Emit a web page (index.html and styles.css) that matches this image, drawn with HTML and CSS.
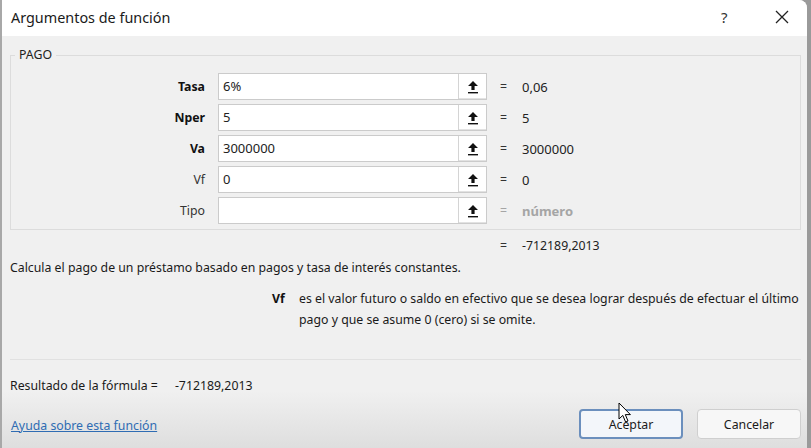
FILE: index.html
```html
<!DOCTYPE html>
<html lang="es">
<head>
<meta charset="utf-8">
<title>Argumentos de función</title>
<link rel="stylesheet" href="styles.css">
</head>
<body>
<div class="window">
  <div class="titlebar">
    <span class="title">Argumentos de función</span>
    <span class="help">?</span>
    <span class="close">
      <svg width="14" height="14" viewBox="0 0 14 14"><path d="M1 1 L13 13 M13 1 L1 13" stroke="#222" stroke-width="1.3" fill="none"/></svg>
    </span>
  </div>
  <div class="content">
    <fieldset class="group">
      <legend>PAGO</legend>
      <div class="args">
        <div class="arg-label strong">Tasa</div>
        <div class="field"><span class="field-text">6%</span><span class="field-btn"><svg width="12" height="14" viewBox="0 0 12 14"><path d="M6 1 L11 6 L7.6 6 L7.6 10 L4.4 10 L4.4 6 L1 6 Z" fill="#111"/><rect x="1" y="12" width="10" height="1.4" fill="#111"/></svg></span></div>
        <div class="eq">=</div><div class="val">0,06</div>

        <div class="arg-label strong">Nper</div>
        <div class="field"><span class="field-text">5</span><span class="field-btn"><svg width="12" height="14" viewBox="0 0 12 14"><path d="M6 1 L11 6 L7.6 6 L7.6 10 L4.4 10 L4.4 6 L1 6 Z" fill="#111"/><rect x="1" y="12" width="10" height="1.4" fill="#111"/></svg></span></div>
        <div class="eq">=</div><div class="val">5</div>

        <div class="arg-label strong">Va</div>
        <div class="field"><span class="field-text">3000000</span><span class="field-btn"><svg width="12" height="14" viewBox="0 0 12 14"><path d="M6 1 L11 6 L7.6 6 L7.6 10 L4.4 10 L4.4 6 L1 6 Z" fill="#111"/><rect x="1" y="12" width="10" height="1.4" fill="#111"/></svg></span></div>
        <div class="eq">=</div><div class="val">3000000</div>

        <div class="arg-label">Vf</div>
        <div class="field"><span class="field-text">0</span><span class="field-btn"><svg width="12" height="14" viewBox="0 0 12 14"><path d="M6 1 L11 6 L7.6 6 L7.6 10 L4.4 10 L4.4 6 L1 6 Z" fill="#111"/><rect x="1" y="12" width="10" height="1.4" fill="#111"/></svg></span></div>
        <div class="eq">=</div><div class="val">0</div>

        <div class="arg-label">Tipo</div>
        <div class="field"><span class="field-text"></span><span class="field-btn"><svg width="12" height="14" viewBox="0 0 12 14"><path d="M6 1 L11 6 L7.6 6 L7.6 10 L4.4 10 L4.4 6 L1 6 Z" fill="#111"/><rect x="1" y="12" width="10" height="1.4" fill="#111"/></svg></span></div>
        <div class="eq muted">=</div><div class="val muted strong">número</div>
      </div>
    </fieldset>

    <div class="result-row"><span class="eq">=</span><span class="val">-712189,2013</span></div>
    <p class="desc">Calcula el pago de un préstamo basado en pagos y tasa de interés constantes.</p>
    <div class="arg-help">
      <span class="arg-help-name">Vf</span>
      <span class="arg-help-text">es el valor futuro o saldo en efectivo que se desea lograr después de efectuar el último pago y que se asume 0 (cero) si se omite.</span>
    </div>

    <div class="separator"></div>
    <div class="formula-result">Resultado de la fórmula =<span class="formula-value">-712189,2013</span></div>

    <div class="footer">
      <a class="help-link" href="#">Ayuda sobre esta función</a>
      <div class="buttons">
        <button class="btn btn-default">Aceptar</button>
        <button class="btn">Cancelar</button>
      </div>
    </div>
  </div>
  <svg class="cursor" width="14" height="22" viewBox="0 0 14 22"><path d="M1 1 L1 17 L4.8 13.4 L7.6 20 L10 19 L7.3 12.6 L12.4 12.6 Z" fill="#fff" stroke="#000" stroke-width="1" stroke-linejoin="round"/></svg>
</div>
</body>
</html>
```

FILE: styles.css
```css
* { box-sizing: border-box; }

html, body {
  margin: 0;
  padding: 0;
  width: 811px;
  height: 448px;
  overflow: hidden;
  background: #9a9a9a;
  font-family: "Noto Sans", "Open Sans", Arial, sans-serif;
  font-size: 12.3px;
  color: #1a1a1a;
}

.window {
  position: relative;
  width: 807px;
  height: 448px;
  background: #f0f0f0;
  border-left: 2px solid #a8a8a8;
  border-top-right-radius: 8px;
  overflow: hidden;
  display: flex;
  flex-direction: column;
}

.titlebar {
  height: 36px;
  background: #ffffff;
  display: flex;
  align-items: center;
  padding-left: 9px;
  flex: none;
}

.title {
  font-size: 14.4px;
  color: #1a1a1a;
  flex: 1;
  padding-bottom: 2px;
}

.help {
  font-size: 15px;
  color: #333;
  width: 54px;
  text-align: left;
  padding-bottom: 2px;
}

.close {
  width: 32px;
  display: flex;
  align-items: center;
  padding-bottom: 2px;
}

.content {
  flex: 1;
  display: flex;
  flex-direction: column;
  padding: 0 6px 0 8px;
  background: linear-gradient(to bottom, #f0f0f0 0px, #f0f0f0 355px, #dedede 412px, #cfcfcf 100%);
}

.group {
  margin: 10px 0 0 0;
  padding: 9px 0 5px 0;
  border: 1px solid #dcdcdc;
  min-width: 0;
}

.group legend {
  margin-left: 4px;
  padding: 0 4px;
  font-size: 12.3px;
  line-height: 18px;
  color: #222;
}

.args {
  display: grid;
  grid-template-columns: 207px 269px 35px auto;
  row-gap: 4px;
  align-items: center;
}

.arg-label {
  text-align: right;
  padding-right: 13px;
  color: #333;
}

.strong { font-weight: 700; color: #111; }

.field {
  display: flex;
  height: 27px;
  border: 1px solid #cbcbcb;
  background: #fff;
}

.field-text {
  flex: 1;
  padding-left: 4px;
  line-height: 25px;
  font-size: 13px;
  color: #222;
}

.field-btn {
  width: 28px;
  display: flex;
  align-items: center;
  justify-content: center;
  border-left: 1px solid #d4d4d4;
  background: #fff;
  box-shadow: inset 0 -1px 0 #e2e2e2;
}

.eq {
  color: #333;
  padding-left: 13px;
}

.val {
  color: #222;
  font-size: 13px;
}

.muted { color: #a5a5a5; }
.val.muted { color: #a5a5a5; }

.result-row {
  display: flex;
  padding-left: 477px;
  margin-top: 7px;
  line-height: 18px;
}

.result-row .eq { width: 35px; }
.result-row .val { font-size: 12.3px; }

.desc {
  margin: 4px 0 0 0;
  line-height: 18px;
  color: #1a1a1a;
}

.arg-help {
  display: flex;
  margin-top: 11px;
  padding-left: 262px;
  line-height: 21px;
}

.arg-help-name {
  font-weight: 700;
  width: 27px;
  flex: none;
  color: #111;
}

.arg-help-text {
  color: #1a1a1a;
}

.separator {
  margin-top: 29px;
  height: 1px;
  background: #e1e1e1;
}

.formula-result {
  margin-top: 17px;
  line-height: 18px;
  color: #1a1a1a;
}

.formula-value { padding-left: 17px; }

.footer {
  display: flex;
  align-items: center;
  justify-content: space-between;
  margin-top: 14px;
}

.help-link {
  color: #2f6cb3;
  text-decoration: underline;
  margin-left: 1px;
  margin-top: 2px;
}

.buttons {
  display: flex;
  gap: 14px;
}

.btn {
  font-family: inherit;
  font-size: 12.3px;
  color: #1a1a1a;
  width: 104px;
  height: 30px;
  border-radius: 4px;
  border: 1px solid #cfcfcf;
  background: #f7f7f7;
  padding: 0;
}

.btn-default {
  border: 2px solid #6b8fbd;
  background: #f3f6fa;
}

.cursor {
  position: absolute;
  left: 616px;
  top: 402px;
}
```
